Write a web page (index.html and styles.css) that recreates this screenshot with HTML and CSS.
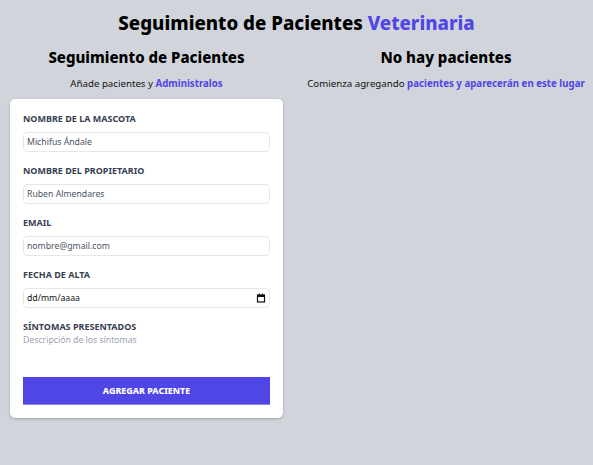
FILE: index.html
```html
<!DOCTYPE html>
<html lang="es">
<head>
<meta charset="utf-8">
<title>Veterinaria</title>
<link rel="stylesheet" href="styles.css">
</head>
<body>
<div class="page">
  <h1 class="title">Seguimiento de Pacientes <span class="accent">Veterinaria</span></h1>
  <div class="columns">
    <section class="form-col">
      <h2 class="col-title">Seguimiento de Pacientes</h2>
      <p class="col-sub">Añade pacientes y <span class="accent-b">Administralos</span></p>
      <form class="card">
        <div class="field">
          <label class="label" for="mascota">NOMBRE DE LA MASCOTA</label>
          <input class="input" id="mascota" type="text" placeholder="Michifus Ándale">
        </div>
        <div class="field">
          <label class="label" for="prop">NOMBRE DEL PROPIETARIO</label>
          <input class="input" id="prop" type="text" placeholder="Ruben Almendares">
        </div>
        <div class="field">
          <label class="label" for="email">EMAIL</label>
          <input class="input" id="email" type="email" placeholder="nombre@gmail.com">
        </div>
        <div class="field">
          <label class="label" for="alta">FECHA DE ALTA</label>
          <div class="input date">
            <span>dd/mm/aaaa</span>
            <svg class="cal" width="10" height="10" viewBox="0 0 10 10"><rect x="1.5" y="2" width="7" height="7" fill="none" stroke="#111" stroke-width="1.2"/><rect x="1.5" y="2" width="7" height="2" fill="#111"/><rect x="3" y="0.5" width="1" height="2" fill="#111"/><rect x="6" y="0.5" width="1" height="2" fill="#111"/></svg>
          </div>
        </div>
        <div class="field">
          <label class="label" for="sintomas">SÍNTOMAS PRESENTADOS</label>
          <textarea class="textarea" id="sintomas" placeholder="Descripción de los síntomas"></textarea>
        </div>
        <button class="btn" type="button">AGREGAR PACIENTE</button>
      </form>
    </section>
    <section class="list-col">
      <h2 class="col-title">No hay pacientes</h2>
      <p class="col-sub">Comienza agregando <span class="accent-b">pacientes y aparecerán en este lugar</span></p>
    </section>
  </div>
</div>
</body>
</html>
```

FILE: styles.css
```css
* { box-sizing: border-box; }
html, body { margin: 0; padding: 0; }
body {
  background: #d1d5db;
  font-family: "Noto Sans", "Open Sans", sans-serif;
  color: #111;
  width: 593px;
  height: 465px;
  overflow: hidden;
}
.page { padding-top: 9px; }
.title {
  margin: 0;
  text-align: center;
  font-size: 18.7px;
  font-weight: 800;
  line-height: 28px;
  color: #000;
}
.accent { color: #4f46e5; }
.accent-b { color: #4f46e5; font-weight: 700; }
.columns {
  display: flex;
  gap: 16px;
  margin-top: 9px;
}
.form-col { width: 273px; margin-left: 10px; }
.list-col { flex: 1; }
.col-title {
  margin: 0;
  text-align: center;
  font-size: 15px;
  font-weight: 800;
  line-height: 22px;
  color: #000;
}
.col-sub {
  margin: 9px 0 0;
  text-align: center;
  font-size: 9.7px;
  line-height: 14px;
  color: #111;
}
.card {
  margin-top: 8px;
  background: #fff;
  border-radius: 5px;
  box-shadow: 0 1px 3px rgba(0,0,0,0.15), 0 1px 2px rgba(0,0,0,0.1);
  padding: 13px 13px 13px;
}
.field { margin-bottom: 12px; }
.label {
  display: block;
  font-size: 9px;
  font-weight: 700;
  line-height: 14px;
  color: #374151;
}
.input {
  display: block;
  width: 100%;
  height: 20px;
  margin-top: 6px;
  border: 1px solid #e5e7eb;
  border-radius: 4px;
  padding: 0 3px;
  font-family: inherit;
  font-size: 8.7px;
  color: #374151;
  background: #fff;
  outline: none;
}
.input::placeholder { color: #4b5563; }
.date {
  display: flex;
  align-items: center;
  justify-content: space-between;
  color: #111;
}
.textarea {
  display: block;
  width: 100%;
  height: 31px;
  margin-top: 0;
  border: none;
  padding: 0;
  resize: none;
  font-family: inherit;
  font-size: 8.7px;
  line-height: 13px;
  outline: none;
}
.textarea::placeholder { color: #9ca3af; }
.btn {
  display: block;
  width: 100%;
  height: 28px;
  border: none;
  border-bottom: 1px solid #8b85f0;
  background: #4f46e5;
  color: #fff;
  font-family: inherit;
  font-weight: 800;
  font-size: 8.9px;
  cursor: pointer;
}
```
